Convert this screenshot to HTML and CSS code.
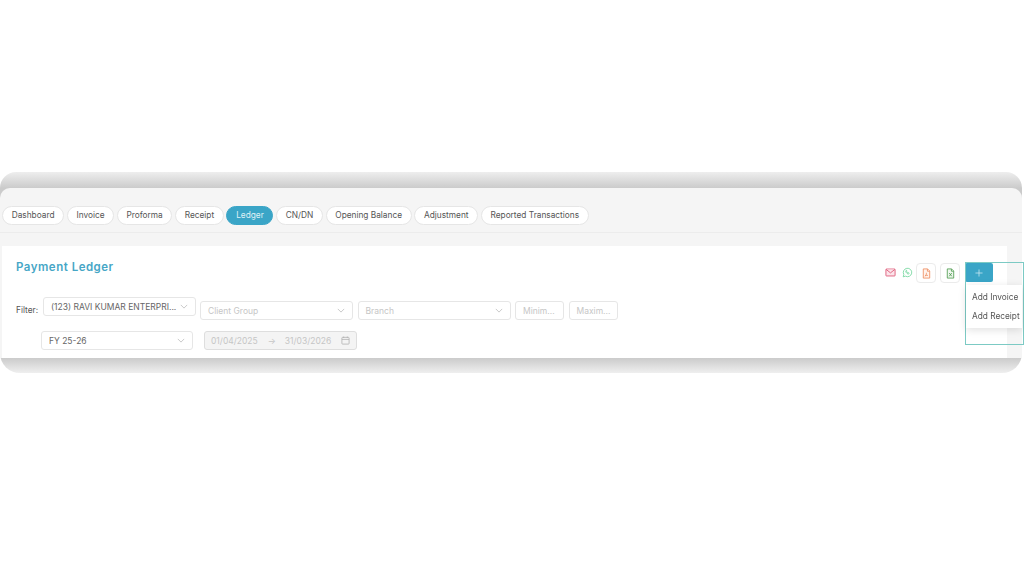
FILE: index.html
```html
<!DOCTYPE html>
<html lang="en">
<head>
<meta charset="utf-8">
<title>Payment Ledger</title>
<link rel="stylesheet" href="styles.css">
</head>
<body>
<div class="frame">
  <div class="panel">
    <nav class="tabs">
      <a class="tab">Dashboard</a>
      <a class="tab">Invoice</a>
      <a class="tab">Proforma</a>
      <a class="tab">Receipt</a>
      <a class="tab active">Ledger</a>
      <a class="tab">CN/DN</a>
      <a class="tab">Opening Balance</a>
      <a class="tab">Adjustment</a>
      <a class="tab">Reported Transactions</a>
    </nav>
    <section class="card">
      <header class="card-head">
        <h1 class="title">Payment Ledger</h1>
        <div class="actions">
          <svg class="ico ico-mail" viewBox="0 0 12 12" width="11" height="11"><rect x="1" y="2.200" width="10" height="7.600" rx="0.600"/><path d="M1.200 2.600 6 6.400l4.800-3.800"/></svg>
          <svg class="ico ico-wa" viewBox="0 0 12 12" width="11" height="11"><path d="M1.300 10.700 2 8.200A4.600 4.600 0 1 1 3.800 10z"/><path d="M4.400 3.900c-.5.5-.4 1.400.4 2.400s1.800 1.500 2.500 1.200c.4-.2.600-.5.600-.8l-1-.6-.5.4c-.6-.2-1.100-.8-1.400-1.400l.4-.5-.5-1z"/></svg>
          <button class="file-btn"><svg class="ico ico-pdf" viewBox="0 0 12 12" width="11" height="11"><path d="M2.500 1h4.700L9.500 3.300V11h-7z"/><path d="M7 1v2.500h2.500"/><path d="M4.500 9c1-1 1.600-2.600 1.400-3.800M4.500 8.400c1-.5 2-.6 3-.3"/></svg></button>
          <button class="file-btn"><svg class="ico ico-xls" viewBox="0 0 12 12" width="11" height="11"><path d="M2.500 1h4.700L9.500 3.300V11h-7z"/><path d="M7 1v2.500h2.500"/><path d="M4.600 5.500 7.400 9M7.400 5.500 4.600 9"/></svg></button>
          <div class="add-wrap">
            <button class="add-btn"><svg class="plus" viewBox="0 0 9 9" width="8" height="8"><path d="M4.500 .5v8M.5 4.500h8"/></svg></button>
            <div class="add-outline"></div>
            <ul class="menu">
              <li>Add Invoice</li>
              <li>Add Receipt</li>
            </ul>
          </div>
        </div>
      </header>
      <div class="filters">
        <span class="filter-label">Filter:</span>
        <div class="field sel w-client raised"><span class="val">(123) RAVI KUMAR ENTERPRI...</span><svg class="chev" viewBox="0 0 10 6" width="8" height="5"><path d="M1 1l4 4 4-4"/></svg></div>
        <div class="field sel w-group"><span class="ph">Client Group</span><svg class="chev" viewBox="0 0 10 6" width="8" height="5"><path d="M1 1l4 4 4-4"/></svg></div>
        <div class="field sel w-group"><span class="ph">Branch</span><svg class="chev" viewBox="0 0 10 6" width="8" height="5"><path d="M1 1l4 4 4-4"/></svg></div>
        <div class="field w-num"><span class="ph">Minim...</span></div>
        <div class="field w-num"><span class="ph">Maxim...</span></div>
      </div>
      <div class="filters second">
        <div class="field sel w-fy"><span class="val">FY 25-26</span><svg class="chev" viewBox="0 0 10 6" width="8" height="5"><path d="M1 1l4 4 4-4"/></svg></div>
        <div class="field date"><span class="ph">01/04/2025</span><span class="ph arrow">→</span><span class="ph">31/03/2026</span>
          <svg class="cal" viewBox="0 0 10 10" width="9" height="9"><rect x="1" y="1.500" width="8" height="7.500" rx="0.800"/><path d="M1 3.800h8M3 .6v1.500M7 .6v1.500"/></svg></div>
      </div>
    </section>
  </div>
</div>
</body>
</html>
```

FILE: styles.css
```css
* { box-sizing: border-box; }
html, body { margin: 0; background: #fff; }
body {
  width: 1024px;
  height: 585px;
  overflow: hidden;
  padding-top: 172px;
  font-family: Inter, "Liberation Sans", sans-serif;
  color: #555;
}
.frame {
  width: 1022px;
  height: 201px;
  padding: 16px 0 15px;
  border-radius: 16px 16px 20px 20px;
  background: linear-gradient(#eeeeee 0, #cbcbcb 16px, #cbcbcb 186px, #efefef 100%);
  filter: blur(0.45px);
}
.panel {
  height: 100%;
  background: #f5f5f5;
  border-radius: 10px 10px 0 0;
  padding: 18px 15px 0 2px;
  display: flex;
  flex-direction: column;
}
.tabs {
  display: flex;
  gap: 2.600px;
  height: 27px;
  border-bottom: 1px solid #ececec;
  padding-bottom: 8px;
  margin-right: -15px;
  margin-left: -2px;
  padding-left: 2px;
}
.tab {
  height: 19px;
  padding: 0 8.700px;
  border: 1px solid #e6e6e6;
  border-radius: 10px;
  background: #fff;
  font-size: 8.300px;
  line-height: 17.500px;
  color: #555;
  white-space: nowrap;
}
.tab.active {
  background: #3aa5c7;
  border-color: #3aa5c7;
  color: #dff1f6;
}
.card {
  margin-top: 13px;
  flex: 1;
  background: #fff;
  padding: 0 0 0 14px;
}
.card-head {
  display: flex;
  justify-content: space-between;
  height: 50px;
}
.title {
  margin: 14px 0 0;
  font-size: 11.500px;
  line-height: 14px;
  font-weight: 600;
  color: #46a6c6;
  letter-spacing: 0.500px;
}
.actions {
  display: flex;
  align-items: flex-start;
  padding-top: 17px;
  margin-right: 14px;
}
.ico { fill: none; stroke-width: 0.900; display: block; }
.ico-mail { stroke: #dc4f6f; fill: #fbe4ea; margin: 4px 6px 0 2px; }
.ico-wa { stroke: #6fd49a; margin: 4px 3px 0 0; }
.ico-pdf { stroke: #ee8a5c; fill: #fff3ec; }
.ico-xls { stroke: #4d9a4d; fill: #eff7ef; }
.file-btn {
  width: 20px;
  height: 20px;
  margin-right: 4px;
  padding: 0;
  display: flex;
  align-items: center;
  justify-content: center;
  background: #fff;
  border: 1px solid #ebebeb;
  border-radius: 4px;
}
.add-wrap { position: relative; margin-left: 1px; }
.add-btn {
  display: flex;
  align-items: center;
  justify-content: center;
  width: 28px;
  height: 19px;
  padding: 0;
  border: 0;
  border-radius: 2px;
  background: #3aa5c7;
}
.plus { fill: none; stroke: #d5eef5; stroke-width: 0.800; }
.add-outline {
  position: absolute;
  left: 0;
  top: -1px;
  width: 59px;
  height: 83px;
  border: 1px solid #7ccac4;
}
.menu {
  position: absolute;
  left: 1px;
  top: 22px;
  width: 56px;
  height: 43px;
  margin: 0;
  padding: 3px 0 0 6px;
  list-style: none;
  background: #fff;
  box-shadow: 0 2px 8px rgba(0,0,0,.12);
  font-size: 8.300px;
  line-height: 19px;
  color: #555;
  white-space: nowrap;
}
.filters {
  display: flex;
  align-items: flex-start;
  gap: 4.500px;
  padding-top: 5px;
}
.filter-label {
  font-size: 8.300px;
  line-height: 19px;
  width: 22.500px;
  color: #555;
}
.field {
  height: 19px;
  border: 1px solid #e6e6e6;
  border-radius: 3px;
  background: #fff;
  display: flex;
  align-items: center;
  padding: 0 7px;
  font-size: 8.500px;
  white-space: nowrap;
  overflow: hidden;
}
.raised { margin-top: -4px; }
.sel { justify-content: space-between; }
.w-client { width: 152.500px; }
.w-group { width: 153px; }
.w-num { width: 49px; }
.w-fy { width: 152px; }
.val { color: #666; }
.ph { color: #c6c6c6; }
.chev { fill: none; stroke: #bdbdbd; stroke-width: 1; flex: none; }
.second { padding: 11px 0 0 25px; gap: 11px; }
.date {
  width: 153px;
  background: #f4f4f4;
  border-color: #dedede;
  justify-content: flex-start;
  padding: 0 6px;
}
.arrow { margin: 0 9px 0 10px; }
.cal { fill: none; stroke: #aaa; stroke-width: 0.800; margin-left: auto; }
```
